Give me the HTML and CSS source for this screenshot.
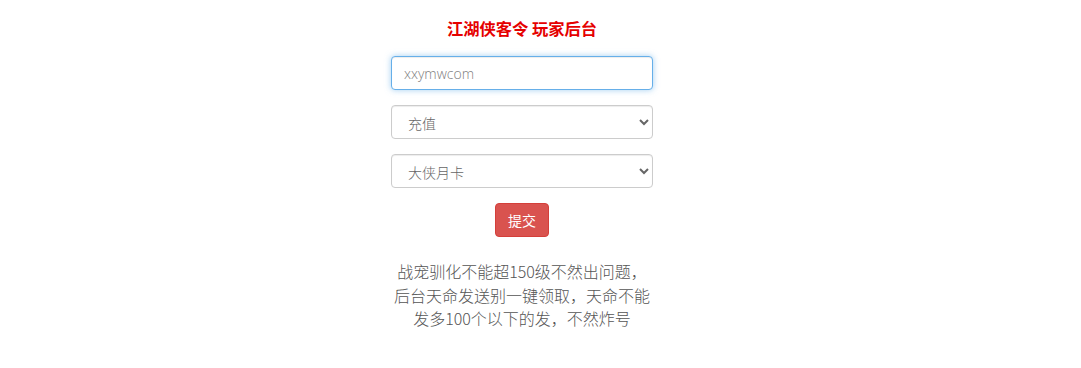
FILE: index.html
```html
<!DOCTYPE html>
<html lang="zh-CN">
<head>
<meta charset="utf-8">
<title>江湖侠客令 玩家后台</title>
<link rel="stylesheet" href="styles.css">
</head>
<body>
<div class="page">
  <form class="panel">
    <h4 class="title">江湖侠客令 玩家后台</h4>
    <div class="form-group">
      <input class="form-control focus" type="text" placeholder="xxymwcom">
    </div>
    <div class="form-group">
      <select class="form-control">
        <option>充值</option>
      </select>
    </div>
    <div class="form-group">
      <select class="form-control">
        <option>大侠月卡</option>
      </select>
    </div>
    <div class="actions">
      <button type="button" class="btn-danger">提交</button>
    </div>
    <p class="note">战宠驯化不能超150级不然出问题，后台天命发送别一键领取，天命不能发多100个以下的发，不然炸号</p>
  </form>
</div>
</body>
</html>
```

FILE: styles.css
```css
html, body {
  margin: 0;
  padding: 0;
  background: #fff;
}
body {
  font-family: "Noto Sans CJK SC", "Noto Sans", sans-serif;
  font-size: 14px;
  color: #333;
}
.page {
  display: flex;
  justify-content: center;
  padding-right: 37px;
}
.panel {
  width: 262px;
  display: flex;
  flex-direction: column;
  padding-top: 18px;
}
.title {
  margin: 0 0 18px;
  text-align: center;
  font-size: 16.3px;
  line-height: 20px;
  font-weight: bold;
  color: #e50000;
}
.form-group {
  margin-bottom: 15px;
}
.form-control {
  display: block;
  box-sizing: border-box;
  width: 100%;
  height: 34px;
  padding: 6px 12px;
  font-family: "Noto Sans CJK SC", "Noto Sans", sans-serif;
  font-size: 14px;
  font-weight: 300;
  color: #666;
  background: #fff;
  border: 1px solid #ccc;
  border-radius: 4px;
  box-shadow: inset 0 1px 1px rgba(0,0,0,.075);
  outline: none;
}
.form-control::placeholder {
  color: #808080;
  font-family: "Open Sans", "Noto Sans", sans-serif;
}
.form-control.focus {
  border-color: #66afe9;
  box-shadow: inset 0 1px 1px rgba(0,0,0,.075), 0 0 6px rgba(102,175,233,.6);
}
select.form-control {
  padding-left: 12px;
}
.actions {
  display: flex;
  justify-content: center;
}
.btn-danger {
  box-sizing: border-box;
  height: 34px;
  width: 54px;
  padding: 6px 12px;
  font-family: "Noto Sans CJK SC", sans-serif;
  font-size: 14px;
  line-height: 20px;
  color: #fff;
  background: #d9534f;
  border: 1px solid #d43f3a;
  border-radius: 4px;
}
.note {
  margin: 23px 0 0;
  text-align: center;
  font-size: 16px;
  line-height: 23.5px;
  color: #555;
  font-weight: 300;
}
```
